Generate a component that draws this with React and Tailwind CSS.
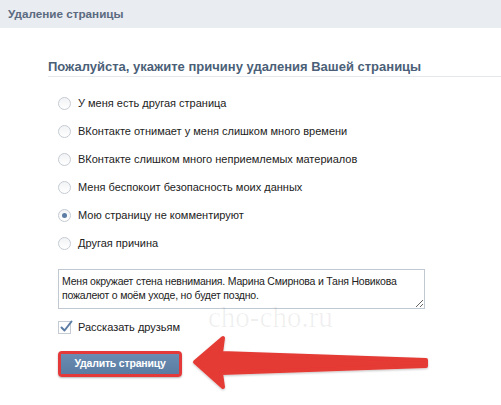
import { useState } from 'react';

const reasons = [
  'У меня есть другая страница',
  'ВКонтакте отнимает у меня слишком много времени',
  'ВКонтакте слишком много неприемлемых материалов',
  'Меня беспокоит безопасность моих данных',
  'Мою страницу не комментируют',
  'Другая причина',
];

function Radio({ checked }) {
  return (
    <span className="flex h-[13px] w-[13px] items-center justify-center rounded-full border border-[#c5cbd3] bg-gradient-to-b from-[#f2f3f5] to-white">
      {checked && <span className="h-[5px] w-[5px] rounded-full bg-[#5c7ca3]" />}
    </span>
  );
}

export default function App() {
  const [picked, setPicked] = useState(4);

  return (
    <div className="relative h-[405px] w-[501px] overflow-hidden bg-white font-['Liberation_Sans',Arial,sans-serif] text-[11px]">
      <div className="flex h-[28px] items-center bg-[#e9ecf0] pl-[8px] text-[11.7px] font-bold text-[#5a6a80]">
        Удаление страницы
      </div>

      <div className="pl-[48px]">
        <h2 className="mt-[31px] border-b border-[#e5e8ec] pb-[1px] text-[13px] leading-[16px] font-bold text-[#4b5f78]">
          Пожалуйста, укажите причину удаления Вашей страницы
        </h2>

        <div className="mt-[12px] pl-[10px]">
          {reasons.map((r, i) => (
            <div
              key={r}
              onClick={() => setPicked(i)}
              className="flex h-[28px] cursor-pointer items-center gap-[7px] text-[#222]"
            >
              <Radio checked={picked === i} />
              <span>{r}</span>
            </div>
          ))}

          <textarea
            defaultValue="Меня окружает стена невнимания. Марина Смирнова и Таня Новикова пожалеют о моём уходе, но будет поздно."
            className="mt-[12px] block h-[40px] w-[367px] resize-y border border-[#c0c8d2] px-[3px] py-[4px] text-[10.5px] leading-[14px] tracking-[-0.2px] text-[#222] outline-none"
          />

          <label className="mt-[9px] flex h-[18px] items-center gap-[7px] text-[#222]">
            <span className="relative h-[13px] w-[13px] border border-[#c5cbd3] bg-white">
              <svg className="absolute -top-[3px] left-0" width="15" height="15" viewBox="0 0 15 15">
                <path d="M2.5 8.5 L5.5 11.5 L12.5 2.5" fill="none" stroke="#5c7ca3" strokeWidth="2" strokeLinecap="round" strokeLinejoin="round" />
              </svg>
            </span>
            Рассказать друзьям
          </label>

          <div className="mt-[15px] inline-flex rounded-[4px] border-[3px] border-[#e3393b] shadow-[0_1px_2px_rgba(0,0,0,0.3)]">
            <button className="h-[20px] w-[118px] bg-gradient-to-b from-[#6a8cb2] to-[#5a7ca3] text-[10.5px] font-bold tracking-[-0.2px] text-white">
              Удалить страницу
            </button>
          </div>
        </div>
      </div>

      <div className="pointer-events-none absolute left-[208px] top-[301px] font-['Liberation_Serif',serif] text-[29px] leading-[32px] text-black/[0.06]">
        cho-cho.ru
      </div>

      <svg className="pointer-events-none absolute left-0 top-0" width="501" height="405" viewBox="0 0 501 405">
        <defs>
          <filter id="sh" x="-10%" y="-30%" width="120%" height="160%">
            <feDropShadow dx="0" dy="1" stdDeviation="1.2" floodColor="#000" floodOpacity="0.25" />
          </filter>
        </defs>
        <path
          d="M195 362 L223 338 L221 353 L426 360 L426 366 L221 373 L223 387 Z"
          fill="#e53a35"
          stroke="#e53a35"
          strokeWidth="4"
          strokeLinejoin="round"
          filter="url(#sh)"
        />
      </svg>
    </div>
  );
}
